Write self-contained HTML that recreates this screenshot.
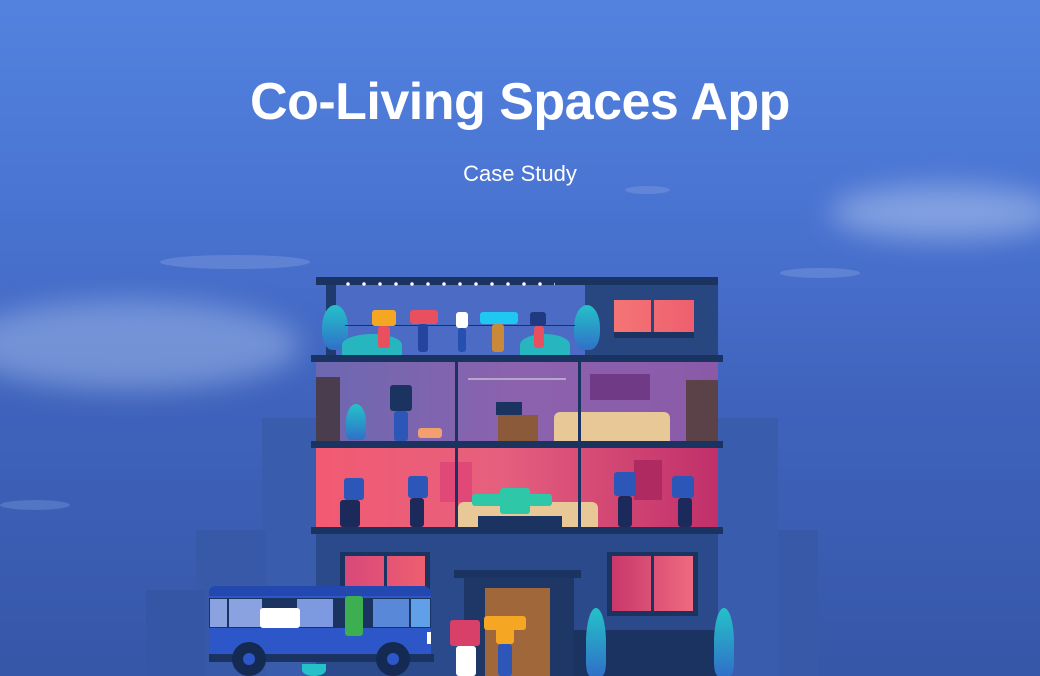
<!DOCTYPE html>
<html><head><meta charset="utf-8"><style>
*{margin:0;padding:0;box-sizing:border-box}
body{width:1040px;height:676px;overflow:hidden;position:relative;background:linear-gradient(180deg,#5282df 0%,#4a74d2 30%,#3f63bc 60%,#3656a8 100%);font-family:"Liberation Sans",sans-serif}
.a{position:absolute}
h1{position:absolute;top:72px;left:0;width:1040px;text-align:center;color:#fff;font-size:52px;font-weight:bold;letter-spacing:-0.5px}
.sub{position:absolute;top:161px;left:0;width:1040px;text-align:center;color:#fff;font-size:22px}
.cloud{position:absolute;border-radius:50%;background:rgba(200,215,245,.45);filter:blur(14px)}
.p{position:absolute;border-radius:3px}
</style></head><body>
<div class="cloud" style="left:830px;top:185px;width:230px;height:55px"></div>
<div class="cloud" style="left:-40px;top:300px;width:340px;height:90px;background:rgba(190,210,245,.4)"></div>
<div class="a" style="left:160px;top:255px;width:150px;height:14px;background:rgba(120,150,220,.5);border-radius:50%"></div>
<div class="a" style="left:780px;top:268px;width:80px;height:10px;background:rgba(120,150,220,.5);border-radius:50%"></div>
<div class="a" style="left:625px;top:186px;width:45px;height:8px;background:rgba(120,150,220,.5);border-radius:50%"></div>
<div class="a" style="left:0px;top:500px;width:70px;height:10px;background:rgba(120,150,220,.4);border-radius:50%"></div>
<h1>Co-Living Spaces App</h1>
<div class="sub">Case Study</div>
<!-- back buildings -->
<div class="a" style="left:262px;top:418px;width:60px;height:258px;background:#3a5cad"></div>
<div class="a" style="left:714px;top:418px;width:64px;height:258px;background:#3a5cad"></div>
<div class="a" style="left:196px;top:530px;width:70px;height:146px;background:#3759a8"></div>
<div class="a" style="left:778px;top:530px;width:40px;height:146px;background:#3759a8"></div>
<div class="a" style="left:146px;top:590px;width:60px;height:86px;background:#3556a4"></div>
<!-- roof floor -->
<div class="a" style="left:316px;top:277px;width:402px;height:8px;background:#1b3360"></div>
<div class="a" style="left:326px;top:285px;width:10px;height:70px;background:#1f3a6e"></div>
<div class="a" style="left:336px;top:285px;width:250px;height:70px;background:#4b6bc4"></div>
<div class="a" style="left:585px;top:285px;width:133px;height:70px;background:#28467f"></div>
<div class="a" style="left:614px;top:300px;width:80px;height:32px;background:linear-gradient(90deg,#f47575,#ee5f6f)"></div>
<div class="a" style="left:651px;top:300px;width:3px;height:32px;background:#28467f"></div>
<div class="a" style="left:614px;top:332px;width:80px;height:6px;background:#1b3360"></div>
<div class="a" style="left:322px;top:305px;width:26px;height:45px;background:linear-gradient(#24c2c8,#3070c8);border-radius:50% 50% 40% 40%"></div>
<div class="a" style="left:574px;top:305px;width:26px;height:45px;background:linear-gradient(#24c2c8,#3070c8);border-radius:50% 50% 40% 40%"></div>
<div class="a" style="left:342px;top:334px;width:60px;height:22px;background:#27b5c0;border-radius:50% 50% 0 0"></div>
<div class="a" style="left:520px;top:334px;width:50px;height:22px;background:#27b5c0;border-radius:50% 50% 0 0"></div>
<div class="a" style="left:345px;top:325px;width:230px;height:1px;background:#1b3360"></div>
<!-- lights -->
<div class="a" style="left:340px;top:282px;width:215px;height:4px;background:radial-gradient(circle,#fff 1.5px,transparent 2px) 0 0/16px 4px"></div>
<!-- people roof -->
<div class="p" style="left:372px;top:310px;width:24px;height:16px;background:#f5a623"></div><div class="p" style="left:378px;top:326px;width:12px;height:22px;background:#e8505f"></div>
<div class="p" style="left:410px;top:310px;width:28px;height:14px;background:#e8505f"></div><div class="p" style="left:418px;top:324px;width:10px;height:28px;background:#2444a0"></div>
<div class="p" style="left:456px;top:312px;width:12px;height:16px;background:#fff"></div><div class="p" style="left:458px;top:328px;width:8px;height:24px;background:#2650b0"></div>
<div class="p" style="left:480px;top:312px;width:38px;height:12px;background:#1ec8f0"></div><div class="p" style="left:492px;top:324px;width:12px;height:28px;background:#c8893a"></div>
<div class="p" style="left:530px;top:312px;width:16px;height:14px;background:#1f3a80"></div><div class="p" style="left:534px;top:326px;width:10px;height:22px;background:#e8505f"></div>
<!-- slab -->
<div class="a" style="left:311px;top:355px;width:412px;height:7px;background:#1b3360"></div>
<!-- floor 2 -->
<div class="a" style="left:316px;top:362px;width:402px;height:79px;background:linear-gradient(90deg,#6c68b0,#8c62ae 50%,#8a5aa8)"></div>
<div class="a" style="left:316px;top:377px;width:24px;height:64px;background:#4a3e4e"></div>
<div class="a" style="left:686px;top:380px;width:32px;height:61px;background:#5a4248"></div>
<div class="a" style="left:590px;top:374px;width:60px;height:26px;background:#703a86"></div>
<div class="a" style="left:468px;top:378px;width:98px;height:2px;background:#b6a6cc"></div>
<div class="a" style="left:498px;top:415px;width:40px;height:26px;background:#8a5a3a"></div>
<div class="a" style="left:496px;top:402px;width:26px;height:13px;background:#1b3360"></div>
<div class="a" style="left:554px;top:412px;width:116px;height:29px;background:#e8c896;border-radius:6px 6px 0 0"></div>
<div class="a" style="left:346px;top:404px;width:20px;height:36px;background:linear-gradient(#24c2c8,#3070c8);border-radius:50% 50% 20% 20%"></div>
<div class="p" style="left:390px;top:385px;width:22px;height:26px;background:#1b3360"></div><div class="p" style="left:394px;top:411px;width:14px;height:30px;background:#2c56b8"></div>
<div class="p" style="left:418px;top:428px;width:24px;height:10px;background:#f2a070"></div>
<div class="a" style="left:455px;top:362px;width:3px;height:79px;background:#1b3360"></div>
<div class="a" style="left:578px;top:362px;width:3px;height:79px;background:#1b3360"></div>
<div class="a" style="left:311px;top:441px;width:412px;height:7px;background:#1b3360"></div>
<!-- floor 3 -->
<div class="a" style="left:316px;top:448px;width:402px;height:79px;background:linear-gradient(90deg,#f25a72,#e6607e 45%,#c0306a)"></div>
<div class="a" style="left:440px;top:462px;width:32px;height:40px;background:#e04878"></div>
<div class="a" style="left:634px;top:460px;width:28px;height:40px;background:#b02a62"></div>
<div class="a" style="left:458px;top:502px;width:140px;height:25px;background:#e8c896;border-radius:6px 6px 0 0"></div>
<div class="p" style="left:472px;top:494px;width:80px;height:12px;background:#2ec8a8"></div><div class="p" style="left:500px;top:488px;width:30px;height:26px;background:#2ec8a8"></div>
<div class="a" style="left:478px;top:516px;width:84px;height:11px;background:#1b3360"></div>
<div class="p" style="left:344px;top:478px;width:20px;height:22px;background:#2c56b8"></div><div class="p" style="left:340px;top:500px;width:20px;height:27px;background:#1b2a5a"></div>
<div class="p" style="left:408px;top:476px;width:20px;height:22px;background:#2c56b8"></div><div class="p" style="left:410px;top:498px;width:14px;height:29px;background:#1b2a5a"></div>
<div class="p" style="left:614px;top:472px;width:22px;height:24px;background:#2c56b8"></div><div class="p" style="left:618px;top:496px;width:14px;height:31px;background:#1b2a5a"></div>
<div class="p" style="left:672px;top:476px;width:22px;height:22px;background:#2c56b8"></div><div class="p" style="left:678px;top:498px;width:14px;height:29px;background:#1b2a5a"></div>
<div class="a" style="left:455px;top:448px;width:3px;height:79px;background:#1b3360"></div>
<div class="a" style="left:578px;top:448px;width:3px;height:79px;background:#1b3360"></div>
<div class="a" style="left:311px;top:527px;width:412px;height:7px;background:#1b3360"></div>
<!-- ground floor -->
<div class="a" style="left:316px;top:534px;width:402px;height:142px;background:#2a4a8c"></div>
<div class="a" style="left:340px;top:552px;width:90px;height:50px;background:#1b3360"></div>
<div class="a" style="left:345px;top:556px;width:80px;height:46px;background:linear-gradient(90deg,#d8487a,#ee5f70)"></div>
<div class="a" style="left:384px;top:556px;width:3px;height:46px;background:#1b3360"></div>
<div class="a" style="left:607px;top:552px;width:91px;height:64px;background:#1b3360"></div>
<div class="a" style="left:612px;top:556px;width:81px;height:55px;background:linear-gradient(90deg,#c8386a,#ee6a80)"></div>
<div class="a" style="left:651px;top:556px;width:3px;height:55px;background:#1b3360"></div>
<div class="a" style="left:454px;top:570px;width:127px;height:8px;background:#1b3360"></div>
<div class="a" style="left:464px;top:578px;width:110px;height:98px;background:#1e3766"></div>
<div class="a" style="left:485px;top:588px;width:65px;height:88px;background:#a0683a"></div>
<div class="a" style="left:573px;top:630px;width:145px;height:46px;background:#1b3360"></div>
<div class="a" style="left:586px;top:608px;width:20px;height:68px;background:linear-gradient(#24c2c8,#3070c8);border-radius:50% 50% 20% 20%"></div>
<div class="a" style="left:714px;top:608px;width:20px;height:68px;background:linear-gradient(#24c2c8,#3070c8);border-radius:50% 50% 20% 20%"></div>
<div class="p" style="left:450px;top:620px;width:30px;height:26px;background:#d8406a"></div><div class="p" style="left:456px;top:646px;width:20px;height:30px;background:#fff"></div>
<div class="p" style="left:484px;top:616px;width:42px;height:14px;background:#f5a623"></div><div class="p" style="left:496px;top:628px;width:18px;height:16px;background:#f5a623"></div><div class="p" style="left:498px;top:644px;width:14px;height:32px;background:#2c56b8"></div>
<!-- bus -->
<div class="a" style="left:209px;top:586px;width:222px;height:72px;background:#2d56c8;border-radius:6px 8px 2px 2px"></div>
<div class="a" style="left:209px;top:586px;width:222px;height:10px;background:#2348b0;border-radius:6px 8px 0 0"></div>
<div class="a" style="left:209px;top:598px;width:222px;height:30px;background:#1b3360"></div>
<div class="a" style="left:210px;top:599px;width:17px;height:28px;background:#8aa2e0"></div>
<div class="a" style="left:229px;top:599px;width:33px;height:28px;background:#8aa2e0"></div>
<div class="a" style="left:297px;top:599px;width:36px;height:28px;background:#7d9ae0"></div>
<div class="a" style="left:373px;top:599px;width:36px;height:28px;background:#5a88d8"></div>
<div class="a" style="left:411px;top:599px;width:19px;height:28px;background:#60a0e8"></div>
<div class="p" style="left:260px;top:608px;width:40px;height:20px;background:#fff"></div>
<div class="p" style="left:345px;top:596px;width:18px;height:40px;background:#3cb050"></div>
<div class="a" style="left:209px;top:654px;width:225px;height:8px;background:#1b3360"></div>
<div class="a" style="left:232px;top:642px;width:34px;height:34px;border-radius:50%;background:#152a52"></div>
<div class="a" style="left:243px;top:653px;width:12px;height:12px;border-radius:50%;background:#2d56c8"></div>
<div class="a" style="left:376px;top:642px;width:34px;height:34px;border-radius:50%;background:#152a52"></div>
<div class="a" style="left:387px;top:653px;width:12px;height:12px;border-radius:50%;background:#2d56c8"></div>
<div class="a" style="left:427px;top:632px;width:4px;height:12px;background:#fff"></div>
<div class="a" style="left:302px;top:664px;width:24px;height:12px;background:#24c2c8;border-radius:0 0 50% 50%"></div>
</body></html>
